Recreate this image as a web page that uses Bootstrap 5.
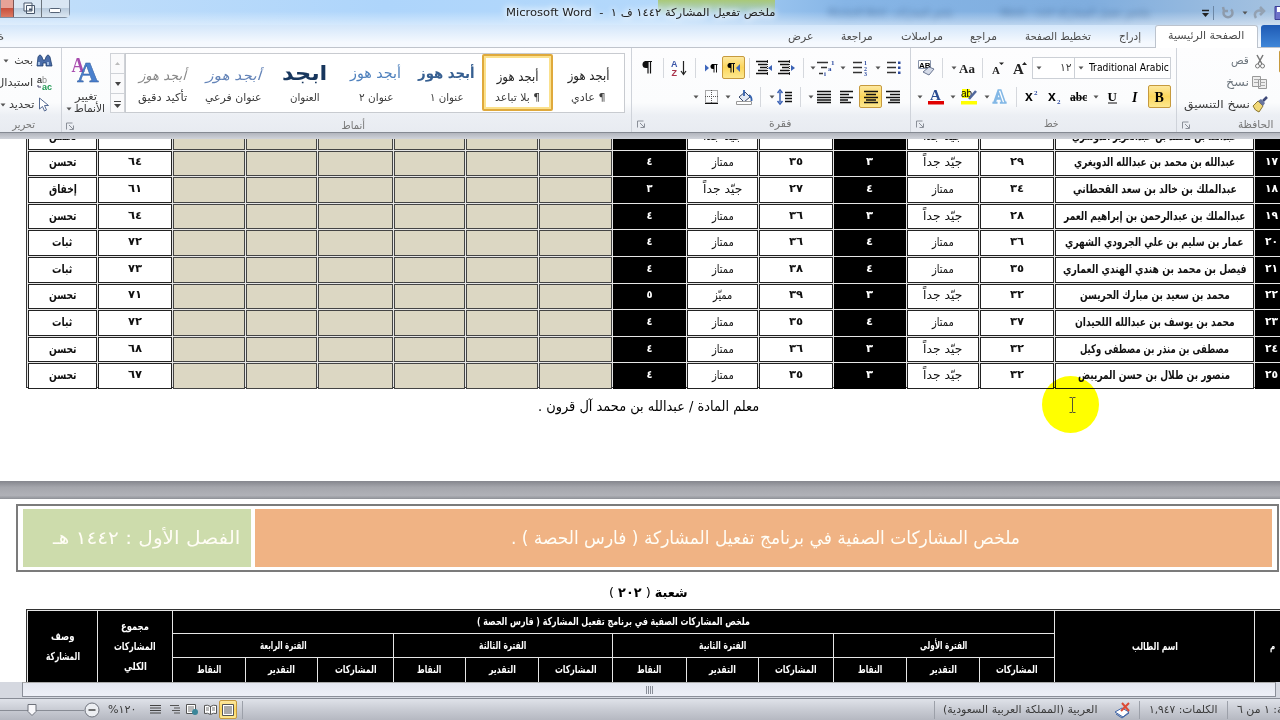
<!DOCTYPE html>
<html lang="ar">
<head>
<meta charset="utf-8">
<title>Microsoft Word</title>
<link href="https://cdn.jsdelivr.net/npm/bootstrap@5.3.0/dist/css/bootstrap.min.css" rel="stylesheet">
<style>
body{width:1280px;height:720px;overflow:hidden;font-family:"DejaVu Sans Condensed","DejaVu Sans",sans-serif;font-size:11px;line-height:1;color:#3b3b3b;background:#fff}
svg{display:block;flex:none;overflow:visible}
svg text{font-family:"Liberation Serif",serif}
.fit{display:inline-block;flex:none;white-space:nowrap;direction:rtl;text-align:right;line-height:20px;height:20px}
.fit>span{display:inline-block;transform-origin:100% 50%}
.ltr{direction:ltr;text-align:left}.ltr>span{transform-origin:0 50%}
.short{height:12px;line-height:12px}
.f9{font-size:9px}.f10{font-size:10px}.f11{font-size:11px}.f12{font-size:12px}.f13{font-size:13px}.f14{font-size:14px}.f16{font-size:16px}.f18{font-size:18px}.f20{font-size:20px}
.titlebar{height:25px;background:linear-gradient(#fff0 45%,#ffffff77),linear-gradient(90deg,#c3dffa,#aed5fb 30%,#b3d8fb 52%,#86b5e6 66%,#7fadde 85%,#a5c2e0)}
.glowtext{text-shadow:0 0 6px #fff,0 0 6px #fff,0 0 10px #fff;color:#222}
.greenish{left:658px;top:0;width:117px;height:16px;background:linear-gradient(#a9c978,#b4d3b000)}
.ghost{filter:blur(3px);color:#3d608a;opacity:.65}
.winbtns{left:0;top:0;width:70px;height:18px;border:1px solid #7d8da0;border-top:0;border-radius:0 0 5px 0;background:#dbe6f1}
.winbtns>i{height:17px;background:linear-gradient(#d9e6f3 48%,#b9cbdd 50%,#dbe7f2)}
.winbtns>.restorebtn{width:27px}
.winbtns>.closebtn{width:15px;background:linear-gradient(#e6a397 45%,#c9513d 50%,#dc7a62);border-right:1px solid #7d5555}
.tabsrow{height:23px;background:linear-gradient(#d3e6fa,#f5f9fe 80%);border-bottom:1px solid #bfc4cc}
.tabsrow .fit{color:#4c4c4c}
.tabactive{width:103px;height:23px;background:#fff;border:1px solid #bcc3cd;border-bottom:0;border-radius:3px 3px 0 0;margin-bottom:-1px}
.filetab{width:20px;height:22px;border-radius:3px 0 0 0;background:linear-gradient(#1e5ab4,#3f86d8)}
.ribbon{height:85px;background:linear-gradient(#fdfdfe,#fbfcfd 65%,#eceff4 80%,#e8ebf1);border-bottom:1px solid #858a93}
.grp{height:84px;border-left:1px solid #cfd3da;flex:none}
.grp .toolrow{height:29px}
.toolpad{padding-top:5px}
.caption{height:17px;color:#777}
.understrip{height:6px;background:linear-gradient(#b2b5bd,#d0d3da)}
.stylebtn{width:48px}
.gallery{width:500px;height:60px;border:1px solid #c8cbd0;background:#fff;padding:0 0 0 1px}
.stylecell{width:71px;height:57px}
.stylecell.on{border:2px solid #dfa93c;border-radius:2px;box-shadow:inset 0 0 0 2px #fbe18c}
.scroller{width:15px;height:60px;border:1px solid #cfd2d7;background:#fafafb}
.scroller>i{height:20px;border-bottom:1px solid #cfd2d7}
.hl{width:23px;height:23px;border:1px solid #c69a3e;border-radius:2px;background:linear-gradient(#fde8a0,#fbd65c 50%,#fde88f);flex:none}
.hl.viewbtn{width:18px;height:19px}
.combo{height:22px;border:1px solid #ccd0d6;background:#fff;flex:none}
.docarea{height:543px;background:#fff}
.firstpage{height:342px}
.grid16{display:grid;gap:1px;grid-template-columns:69px 74px 72px 71px 75px 71px 72px 73px 73px 71px 74px 72px 72px 74px 199px 41px;width:1300px;margin-left:26px;border:1px solid #333;padding:1px;background:#e6e6e6}
.grid16>div{display:flex;align-items:center;justify-content:center;overflow:hidden}
.gtop{grid-auto-rows:25.6px;border-top:0;margin-top:-16px;height:264.5px;color:#111;font-weight:bold}
.gtop>div{border:1px solid #222;background:#fff;padding-bottom:2px}
.gtop>.tan{background:#dcd7c3;border-color:#444}
.grid16>.blk{background:#000;color:#fff;border:0}
.gtop>.edgecell{padding-right:8px}
.ghead>.edgecell{padding-right:6px}
.ghead{grid-template-rows:22px 23px 24px;font-weight:bold;border-color:#333}
.pagebreak{height:18px;background:linear-gradient(#85868d,#a5a6ac 35%,#b0b1b7 80%,#8e9096)}
.banner{height:68px;margin:5px 1px 0 16px;border:2px solid #7b7b7b;padding:3px 5px;gap:4px;color:#fffdf5}
.bgreen{width:228px;background:#cddcac}.borange{background:#f0b384}
.sectionrow{height:37px}
.hscroll{height:16px;background:#d5d8e0}
.hthumb{width:1254px;height:15px;margin-left:22px;border:1px solid #8b8f99;border-top-color:#aaa;background:linear-gradient(#e4e7f0,#eef0f7)}
.statusbar{height:22px;background:linear-gradient(#dfe2e9,#c9ccd4 50%,#b5b8c1);border-top:1px solid #878b95}
.vsep{width:1px;height:18px;background:#9ca0a9;flex:none}
.spot{left:1042px;top:376px;width:57px;height:57px;border-radius:50%;background:#ff0;mix-blend-mode:multiply}
.ibeam{left:1066px;top:396px}
</style>
</head>
<body class="m-0">
<div class="titlebar position-relative">
  <div class="greenish position-absolute"></div>
  <div class="d-flex align-items-center h-100" id="titlerow"></div>
  <div class="winbtns position-absolute d-flex">
    <i class="closebtn"></i><i class="restorebtn"><svg width="27" height="17" viewBox="15 0 27 17"><path d="M25 3h8v8h-8z M27.500 5.500h8v8h-8z" fill="#f7fafc" stroke="#48566a"/><path d="M30 8.500h3v2h-3z" fill="#48566a"/></svg></i><i class="flex-fill border-start border-secondary"><svg width="27" height="17" viewBox="42 0 27 17"><rect x="49.500" y="8.500" width="11" height="4" rx="1" fill="#fff" stroke="#566477"/></svg></i>
  </div>
</div>
<div class="tabsrow d-flex align-items-end" id="tabsrow"></div>
<div class="ribbon d-flex overflow-hidden">
  <div class="grp border-0 position-relative" id="gEdit"></div>
  <div class="grp" id="gStyles"></div>
  <div class="grp" id="gPara"></div>
  <div class="grp" id="gFont"></div>
  <div class="grp" id="gClip"></div>
</div>
<div class="understrip"></div>
<div class="docarea overflow-hidden position-relative">
  <div class="firstpage overflow-hidden">
    <div class="grid16 gtop" id="gtop"></div>
    <div class="d-flex" id="teacher"></div>
  </div>
  <div class="pagebreak"></div>
  <div class="banner d-flex">
    <div class="bgreen d-flex align-items-center" id="bgreen"></div>
    <div class="borange flex-fill d-flex align-items-center" id="borange"></div>
  </div>
  <div class="sectionrow d-flex align-items-center" id="section"></div>
  <div class="grid16 ghead" id="ghead"></div>
</div>
<div class="hscroll"><div class="hthumb d-flex align-items-center justify-content-center"><svg width="9" height="8"><path d="M1.500 0v8M3.500 0v8M5.500 0v8M7.500 0v8" stroke="#8a8e98"/></svg></div></div>
<div class="statusbar d-flex align-items-center overflow-hidden" id="status"></div>
<div class="spot position-absolute"></div>
<svg class="ibeam position-absolute" width="13" height="18" viewBox="1066 396 13 18"><path d="M1069.500 397.500h2.500l.5 1 .5-1h2.500M1072.500 398v13.500M1069.500 412.500h2.500l.5-1 .5 1h2.500" fill="none" stroke="#555533"/></svg>
<script src="https://cdn.jsdelivr.net/npm/bootstrap@5.3.0/dist/js/bootstrap.bundle.min.js"></script>
<script>
const $=id=>document.getElementById(id);
const T=(t,w,c='')=>`<span class="fit ${c}" data-w="${w}"><span>${t}</span></span>`;
// row: items are [left, width, html], spacing is derived from the preceding item
const row=(start,items)=>{let p=start;return items.map(([x,w,h])=>{const m=x-p;p=x+w;return `<div class="flex-shrink-0" style="margin-left:${m}px;width:${w}px">${h}</div>`}).join('')};
const S=(x,y,w,h,b)=>[x,w,`<svg width="${w}" height="${h}" viewBox="${x} ${y} ${w} ${h}">${b}</svg>`];
const arrow=(x,y)=>S(x-3,y-2,6,4,`<path d="M${x-2.5} ${y-1.5}h5l-2.500 3z" fill="#555"/>`);
const sep=(x,y)=>S(x,y-10,1,20,`<path d="M${x+.5} ${y-10}v20" stroke="#d5d8dd"/>`);
const lines=(a,c='#111')=>`<path d="${a.map(([x,y,w])=>`M${x} ${y+.5}h${w}`).join('')}" stroke="${c}" fill="none" stroke-width="1.300"/>`;
const hl=(x,svg)=>[x,23,`<div class="hl d-flex align-items-center justify-content-center">${svg}</div>`];
const txt=(x,w,t,c)=>[x,w,T(t,w,c)];
const launch=x=>S(x,120,8,8,`<path d="M${x+.5} 127.500v-6.500h6M${x+3} 123l4 4M${x+7.500} 123.500v4h-4" stroke="#8a8f98" fill="none"/>`);

$('titlerow').innerHTML=row(0,[txt(506,269,'ملخص تفعيل المشاركة ١٤٤٢ ف ١ &nbsp;- &nbsp;Microsoft Word','glowtext'),
 [828,125,T('ملخص المشاركات - Microsoft Word',125,'ghost')],[1000,150,T('ملخص تفعيل المشاركة ١٤٤٢ - Word',150,'ghost')],
 S(1201,6,9,12,'<path d="M1202 9.500h7" stroke="#222" stroke-width="1.500"/><path d="M1202 12h7l-3.500 4z" fill="#222"/>'),
 S(1213,5,2,14,'<path d="M1213.500 5v14" stroke="#6c87a5"/>'),
 S(1221,4,14,14,'<path d="M1225 7.500a4.500 4.500 0 1 0 6 0M1223 5l1 4 4 0" fill="none" stroke="#8d9bac" stroke-width="2.500"/>'),
 arrow(1245,10),
 S(1253,4,14,14,'<path d="M1256 16c-3-5 1-9 6-7M1260 5l4 4-4 4" fill="none" stroke="#93a1b2" stroke-width="2.500"/>'),
 S(1274,4,6,14,'<path d="M1275 4.500h8v13h-8z" fill="#6e72c9" stroke="#3c3f96"/><path d="M1277 5h4v5h-4z" fill="#fff"/>')]);
$('tabsrow').innerHTML=row(0,[txt(-3,7,'ة'),txt(788,25,'عرض'),txt(841,32,'مراجعة'),txt(901,42,'مراسلات'),txt(970,27,'مراجع'),txt(1025,66,'تخطيط الصفحة'),txt(1119,22,'إدراج'),
 [1155,103,`<div class="tabactive d-flex justify-content-center">${T('الصفحة الرئيسية',76)}</div>`],[1261,19,'<div class="filetab"></div>']]);

const group=(w,start,r1,r2,cap)=>`<div class="toolpad" style="width:${w}px"><div class="toolrow d-flex align-items-center">${row(start,r1)}</div><div class="toolrow d-flex align-items-center">${row(start,r2)}</div><div class="caption d-flex align-items-center mt-1">${row(start,cap)}</div></div>`;
// editing
$('gEdit').innerHTML=`<div style="width:61px;padding-top:2px">`+[
 [arrow(6,60),txt(14,19,'بحث'),S(36,53,17,15,'<path d="M38 56q2-4 4 0l1 3h2l1-3q2-4 4 0l2 9h-6v-3h-3v3h-6z" fill="#4a6ca8" stroke="#22406f" stroke-width=".8"/><path d="M39 61v3M48 61v3" stroke="#bcd3f2" stroke-width="1.500"/>')],
 [txt(-4,37,'استبدال'),S(37,76,16,14,'<text x="37" y="83" font-size="9" style="font-family:Liberation Sans"><tspan>a</tspan><tspan fill="#888">b</tspan></text><text x="42" y="90" font-size="9" font-weight="bold" fill="#295" style="font-family:Liberation Sans">ac</text><path d="M38 85v2h3" stroke="#446" fill="none"/>')],
 [arrow(3,104),txt(9,25,'تحديد'),S(38,96,12,16,'<path d="M39.500 97v11l3-2.500 2 4.500 2-1-2-4.500h4z" fill="#fff" stroke="#556a93"/>')]
 ].map(r=>`<div class="d-flex align-items-center" style="height:22px">${row(0,r)}</div>`).join('')+`<div class="caption d-flex align-items-center">${row(0,[txt(12,23,'تحرير')])}</div></div>`;
// styles
const st=[['أبجد هوز',47,'f13 fst-italic','#8a8a8a','تأكيد دقيق',49],['أبجد هوز',55,'f13 fst-italic','#6484b8','عنوان فرعي',57],['ابجد',45,'f20 fw-bold text-decoration-underline','#17365d','العنوان',30],['أبجد هوز',51,'f14','#4f81bd','عنوان ٢',35],['أبجد هوز',57,'f14 fw-bold','#365f91','عنوان ١',34],['أبجد هوز',42,'f13','#222','¶ بلا تباعد',45],['أبجد هوز',42,'f13','#222','¶ عادي',35]];
$('gStyles').innerHTML=`<div style="width:569px"><div class="d-flex" style="height:69px;padding-top:5px">
<div class="stylebtn d-flex flex-column align-items-center"><svg width="30" height="30" viewBox="70 52 30 30"><text x="70.500" y="71" font-size="21" font-weight="bold" fill="#a84cae" textLength="13" lengthAdjust="spacingAndGlyphs">A</text><text x="76" y="81" font-size="30" font-weight="bold" fill="#4a80cd" stroke="#2a5597" stroke-width=".4">A</text></svg><div class="d-flex mt-2">${T('تغيير',22,'short')}</div><div class="d-flex align-items-center w-100">${row(62,[arrow(69,106),txt(74,31,'الأنماط','short')])}</div></div>
<div class="scroller"><i class="d-flex align-items-center justify-content-center"><svg width="5" height="3"><path d="M0 3h5l-2.500-3z" fill="#bbb"/></svg></i><i class="d-flex align-items-center justify-content-center"><svg width="6" height="4"><path d="M0 0h6l-3 4z" fill="#444"/></svg></i><i class="d-flex align-items-center justify-content-center border-0"><svg width="7" height="7"><path d="M0 .5h7" stroke="#444"/><path d="M0 3h7l-3.500 4z" fill="#444"/></svg></i></div>
<div class="gallery d-flex">${st.map((s,i)=>`<div class="stylecell ${i==5?'on':''} d-flex flex-column align-items-center"><div class="d-flex align-items-center" style="height:${i==5?32:34}px;color:${s[3]};padding-top:${s[2].includes('f13')?10:3}px">${T(s[0],s[1],s[2])}</div>${T(s[4],s[5])}</div>`).join('')}</div>
</div><div class="caption d-flex align-items-center">${row(62,[launch(66),txt(342,23,'أنماط')])}</div></div>`;
// paragraph
const ind=(x,d)=>S(x,60,17,16,lines([[x,61,12],[x+2,64,9],[x+4,67,7],[x+2,70,9],[x,73,12]])+`<path d="${d>0?`M${x+17} 68l-4-3v6z`:`M${x+12} 68l4-3v6z`}" fill="#3b62b5"/><path d="M${x+11.500} 60v16" stroke="#333" stroke-dasharray="1 1"/>`);
$('gPara').innerHTML=group(278,632,[
 S(641,61,12,15,'<path d="M648 62.500v12M650.500 62.500v12M645 62.500h7" stroke="#111" stroke-width="1.200"/><path d="M648 62h-2a3.500 3.500 0 0 0 0 7h2z" fill="#111"/>'),
 sep(663,68),S(671,60,16,16,'<text x="671" y="67" font-size="9" font-weight="bold" fill="#3b56a8" style="font-family:Liberation Sans">A</text><text x="671.500" y="76" font-size="9" font-weight="bold" fill="#a8324a" style="font-family:Liberation Sans">Z</text><path d="M683.500 61v13M681 71l2.500 3.500 2.500-3.500" fill="none" stroke="#222" stroke-width="1.200"/>'),
 sep(695,68),S(704,61,14,14,'<path d="M705 64.500l4 3.500-4 3.500z" fill="#3e67bd"/><path d="M714 64.500v8M716.500 64.500v8M712 64.500h5.500" stroke="#111"/><path d="M714 64h-1a2.500 2.500 0 0 0 0 5h1z"/>'),
 hl(722,'<svg width="14" height="10" viewBox="726 63 14 10"><path d="M739 64l-4 4 4 4z" fill="#3e67bd"/><path d="M730 63.500v9M732.500 63.500v9M728 63.500h6" stroke="#111"/><path d="M730 63h-1a2.500 2.500 0 0 0 0 5h1z"/></svg>'),
 sep(749,68),ind(756,-1),ind(778,1),sep(803,68),arrow(813,68),
 S(817,60,18,16,lines([[817,62,11],[821,67,6],[819,73,4]],'#333')+'<text x="831" y="65" font-size="7" font-weight="bold" fill="#2c4ba0">1</text><text x="828" y="71" font-size="7" font-weight="bold" fill="#2c4ba0">a</text><text x="824" y="76" font-size="7" font-weight="bold" fill="#2c4ba0">i</text>'),
 arrow(843,68),S(853,60,15,16,lines([[853,62,9],[853,67,9],[853,72,9]],'#333')+'<text x="864" y="65" font-size="6" font-weight="bold" fill="#2c4ba0">1</text><text x="864" y="70.500" font-size="6" font-weight="bold" fill="#2c4ba0">2</text><text x="864" y="76" font-size="6" font-weight="bold" fill="#2c4ba0">3</text>'),
 arrow(878,68),S(887,60,14,16,lines([[887,62,9],[887,67,9],[887,72,9]],'#333')+'<path d="M898 61.500h2.500v2.500h-2.500zM898 66.500h2.500v2.500h-2.500zM898 71.500h2.500v2.500h-2.500z" fill="#2c4ba0"/>')
],[
 arrow(696,97),S(704,90,15,14,'<path d="M705.500 90.500h12v12h-12zM711.500 90v13M705 96.500h13" fill="none" stroke="#555" stroke-dasharray="1 1"/><path d="M705 103.500h13" stroke="#111"/>'),
 arrow(728,97),S(736,89,17,16,'<path d="M739 97l6-5 5 5-6 5z" fill="#e5ebf5" stroke="#37476a"/><path d="M744 96v-6M749 95q3 2 2.500 6" stroke="#3663ae" stroke-width="1.800" fill="none"/><path d="M736.500 101.500h15v3h-15z" fill="#fff" stroke="#999"/>'),
 sep(760,97),arrow(772,97),S(777,89,16,16,'<path d="M780 92v10M777.500 93l2.500-3 2.500 3M777.500 101l2.500 3 2.500-3" stroke="#3b62b5" fill="none" stroke-width="1.500"/>'+lines([[785,92,7],[785,95,7],[785,98,7],[785,101,7]])),
 sep(800,97),arrow(811,97),
 S(817,91,14,12,lines([[817,91,14],[817,94,14],[817,97,14],[817,99.500,14],[817,102,14]])),
 S(840,91,14,12,lines([[840,91,13],[840,94,9],[840,97,13],[840,99.500,8],[840,102,11]])),
 hl(859,'<svg width="14" height="12" viewBox="863 91 14 12">'+lines([[863,91,14],[865,94,10],[863,97,14],[865,99.500,10],[863,102,14]])+'</svg>'),
 S(886,91,14,12,lines([[886,91,14],[890,94,10],[886,97,14],[890,99.500,10],[888,102,12]]))
],[launch(637),txt(769,22,'فقرة')]);
// font
$('gFont').innerHTML=group(265,911,[
 S(918,60,17,16,'<path d="M918.500 60.500h12v8h-12z" fill="#fff" stroke="#8894aa"/><text x="919" y="68" font-size="8" font-weight="bold" style="font-family:Liberation Sans">AB</text><path d="M923 72l6-5 5 2-5 6z" fill="#d5dbe8" stroke="#6a7691"/>'),
 sep(942,68),arrow(954,68),S(959,61,15,14,'<text x="959" y="73" font-size="13" font-weight="bold" fill="#222">Aa</text>'),sep(982,68),
 S(991,61,13,14,'<text x="992" y="74" font-size="11" font-weight="bold" fill="#222">A</text><path d="M999 62.500h5l-2.500 2.500z" fill="#222"/>'),
 S(1013,61,14,14,'<text x="1013" y="74" font-size="15" font-weight="bold" fill="#222">A</text><path d="M1022 65h5l-2.500-3z" fill="#222"/>'),
 [1032,43,`<div class="combo d-flex align-items-center">${row(1033,[arrow(1039,68),txt(1060,12,'١٢')])}</div>`],
 [1074,97,`<div class="combo d-flex align-items-center overflow-hidden">${row(1075,[arrow(1081,68),txt(1089,80,'Traditional Arabic','ltr text-black')])}</div>`]
],[
 arrow(920,97),S(927,89,17,16,'<text x="930" y="100" font-size="15" font-weight="bold" fill="#2a4d92">A</text><path d="M928 101h16v3.500h-16z" fill="#e00000"/>'),
 arrow(953,97),S(961,89,17,16,'<path d="M961 101h16v3.500h-16zM962 89h8v9h-8z" fill="#ff0"/><text x="961" y="97" font-size="10" style="font-family:Liberation Sans">ab</text><path d="M969 99l7-8" stroke="#50679c" stroke-width="2.500"/>'),
 arrow(987,97),S(991,89,17,16,'<text x="993" y="103" font-size="18" font-weight="bold" fill="#fff" stroke="#83b8e6" stroke-width="1.500">A</text>'),sep(1016,97),
 S(1025,89,14,15,'<text x="1025" y="101" font-size="14" font-weight="bold" style="font-family:Liberation Sans">x</text><text x="1034" y="95" font-size="7" font-weight="bold" fill="#2c4ba0">2</text>'),
 S(1048,89,14,15,'<text x="1048" y="101" font-size="14" font-weight="bold" style="font-family:Liberation Sans">x</text><text x="1057" y="104" font-size="7" font-weight="bold" fill="#2c4ba0">2</text>'),
 S(1070,90,17,14,'<text x="1070" y="101" font-size="11.500" font-weight="bold">abc</text><path d="M1070 98h17" stroke="#222"/>'),
 arrow(1096,97),S(1107,90,11,14,'<text x="1107.500" y="101" font-size="13" font-weight="bold">U</text><path d="M1108 103h9" stroke="#111"/>'),
 S(1130,90,11,14,'<text x="1132" y="102" font-size="14" font-weight="bold" font-style="italic">I</text>'),
 hl(1148,'<svg width="11" height="12" viewBox="0 0 11 12"><text x="0.500" y="11" font-size="14" font-weight="bold">B</text></svg>')
],[launch(916),txt(1044,15,'خط')]);
// clipboard
$('gClip').innerHTML=`<div style="width:103px;padding-top:2px">`+[
 [txt(1231,18,'قص','text-secondary'),S(1255,53,11,15,'<path d="M1257 54l5 9M1263 54l-5 9" stroke="#777" stroke-width="1.500"/><circle cx="1257.500" cy="65" r="2" fill="none" stroke="#777"/><circle cx="1262.500" cy="65" r="2" fill="none" stroke="#777"/>'),[1279,8,'<div class="hl"></div>']],
 [txt(1226,23,'نسخ','text-secondary'),S(1252,76,15,14,'<path d="M1252.500 76.500h8v10h-8zM1258.500 79.500h8v9h-8z" fill="#eee" stroke="#999"/><path d="M1254 79.500h4M1254 82.500h4M1260 82.500h5M1260 85.500h5" stroke="#aaa"/>')],
 [txt(1184,66,'نسخ التنسيق'),S(1252,97,16,14,'<path d="M1253 105l5-5 5 5-4 6q-4-1-6-6z" fill="#f1d878" stroke="#8c7631"/><path d="M1258 100l5 5 2-3-4-4z" fill="#69759f"/><path d="M1263 100l4-4" stroke="#3e4877" stroke-width="2.500"/>')]
 ].map(r=>`<div class="d-flex align-items-center" style="height:22px">${row(1177,r)}</div>`).join('')+`<div class="caption d-flex align-items-center">${row(1177,[launch(1182),txt(1238,35,'الحافظة')])}</div></div>`;

// students: no., name, name width, first period, second period, total, description
const m='ممتاز',j='جيّد جداً',x='مميّز';
const rows=[['١٦','عبدالله بن محمد بن عبدالعزيز الدوسري',165,'٣١',j,'٣','٢٩',j,'٤','٥٨','تحسن'],
['١٧','عبدالله بن محمد بن عبدالله الدويغري',161,'٢٩',j,'٣','٣٥',m,'٤','٦٤','تحسن'],
['١٨','عبدالملك بن خالد بن سعد القحطاني',164,'٣٤',m,'٤','٢٧',j,'٣','٦١','إخفاق'],
['١٩','عبدالملك بن عبدالرحمن بن إبراهيم العمر',181,'٢٨',j,'٣','٣٦',m,'٤','٦٤','تحسن'],
['٢٠','عمار بن سليم بن علي الجرودي الشهري',178,'٣٦',m,'٤','٣٦',m,'٤','٧٢','ثبات'],
['٢١','فيصل بن محمد بن هندي الهندي العماري',183,'٣٥',m,'٤','٣٨',m,'٤','٧٣','ثبات'],
['٢٢','محمد بن سعيد بن مبارك الحريسن',150,'٣٢',j,'٣','٣٩',x,'٥','٧١','تحسن'],
['٢٣','محمد بن يوسف بن عبدالله اللحيدان',160,'٣٧',m,'٤','٣٥',m,'٤','٧٢','ثبات'],
['٢٤','مصطفى بن منذر بن مصطفى وكيل',149,'٣٢',j,'٣','٣٦',m,'٤','٦٨','تحسن'],
['٢٥','منصور بن طلال بن حسن المريبض',152,'٣٢',j,'٣','٣٥',m,'٤','٦٧','تحسن']];
const C=(h,c='')=>`<div class="${c}">${h}</div>`,gw=g=>g==j?39:g==m?22:19,N=(t,w=14)=>T(t,w,'f11');
$('gtop').innerHTML=rows.map(r=>C(T(r[10],r[10]=='ثبات'?20:28,'f12'))+C(N(r[9]))+C('','tan').repeat(6)+C(N(r[8],6),'blk')+C(T(r[7],gw(r[7]),'f12 fw-normal'))+C(N(r[6]))+C(N(r[5],7),'blk')+C(T(r[4],gw(r[4]),'f12 fw-normal'))+C(N(r[3]))+C(T(r[1],r[2],'f12'))+`<div class="blk edgecell">${N(r[0],13)}</div>`).join('');
$('teacher').innerHTML=row(0,[txt(538,221,'معلم المادة / عبدالله بن محمد آل قرون .','f14 text-black mt-2')]);
$('bgreen').innerHTML=row(23,[txt(53,187,'الفصل الأول : ١٤٤٢ هـ','f18')]);
$('borange').innerHTML=row(255,[txt(511,509,'ملخص المشاركات الصفية في برنامج تفعيل المشاركة ( فارس الحصة ) .','f18')]);
$('section').innerHTML=row(0,[txt(609,79,'<span class="fw-bold">شعبة</span> ( <span class="fw-bold">٢٠٢</span> )','f13 text-black mt-1')]);
const G=(h,c,cs,r,rs)=>`<div class="blk flex-column" style="grid-area:${r}/${c}/span ${rs}/span ${cs}">${h}</div>`;
let h=G(T('وصف',24)+T('المشاركة',34),1,1,1,3)+G(T('مجموع',28)+T('المشاركات',42)+T('الكلي',23),2,1,1,3)+G(T('ملخص المشاركات الصفية في برنامج تفعيل المشاركة ( فارس الحصة )',273),3,12,1,1);
['الرابعة','الثالثة','الثانية','الأولى'].forEach((p,i)=>{h+=G(T('الفترة '+p,47),3+3*i,3,2,1);['النقاط','التقدير','المشاركات'].forEach((q,k)=>h+=G(T(q,[24,27,42][k]),3+3*i+k,1,3,1))});
h+=G(T('اسم الطالب',46),15,1,1,3)+`<div class="blk edgecell" style="grid-area:1/16/span 3/span 1">${T('م',5)}</div>`;
$('ghead').innerHTML=h;
// status bar
const pg=(a,b)=>`<path d="M${a} ${b}h11M${a} ${b+2.500}h11M${a} ${b+5}h11M${a} ${b+7.500}h11" stroke="#444"/>`;
$('status').innerHTML=row(0,[S(0,700,82,18,'<path d="M0 709.500h84" stroke="#888c95"/><path d="M28 703.500h8v7l-4 4-4-4z" fill="#f7f7fa" stroke="#6d717a"/>'),
 S(84,701,16,16,'<circle cx="92" cy="709" r="7" fill="#eceef2" stroke="#70747e"/><path d="M88.500 709h7" stroke="#444" stroke-width="1.500"/>'),txt(108,28,'%١٢٠','ltr'),
 S(150,704,12,11,pg(150,705.500)),S(170,704,10,11,'<path d="M170 705.500h9M174 708h6M172 710.500h8M174 713h6" stroke="#555"/>'),
 S(186,703,13,12,'<path d="M186.500 703.500h9v9h-9z" fill="#fff" stroke="#555"/><path d="M188 706h6M188 708h6M188 710h4" stroke="#777"/><circle cx="195" cy="711" r="3" fill="#3b8699"/>'),
 S(204,703,13,12,'<path d="M204.500 704.500q3-1 6 1 3-2 6-1v8q-3-1-6 1-3-2-6-1zM210.500 705v8" fill="#fff" stroke="#555"/><path d="M206 707h3M206 709h3M212 707h3M212 709h3" stroke="#777"/>'),
 [219,18,'<div class="hl viewbtn d-flex align-items-center justify-content-center"><svg width="12" height="12" viewBox="222 703 12 12"><path d="M222.500 703.500h11v11h-11z" fill="#fff" stroke="#555"/><path d="M224 706h8M224 708h8M224 710h8M224 712h8" stroke="#555"/></svg></div>'],
 [242,1,'<div class="vsep"></div>'],[934,1,'<div class="vsep"></div>'],txt(943,154,'العربية (المملكة العربية السعودية)'),
 S(1114,701,17,16,'<path d="M1115 711l7-4 7 4-6 5z" fill="#fff" stroke="#3e64a8"/><path d="M1116 713l6 4 7-5" stroke="#3e64a8" fill="none"/><path d="M1122 702l7 8M1129 702l-8 8" stroke="#dc4a35" stroke-width="2"/>'),
 [1139,1,'<div class="vsep"></div>'],txt(1149,68,'الكلمات: ١,٩٤٧'),[1227,1,'<div class="vsep"></div>'],txt(1237,74,'الصفحة: ١ من ٦')]);
document.querySelectorAll('.fit').forEach(e=>{e.style.width=e.dataset.w+'px';const s=e.firstElementChild;s.style.transform=`scaleX(${e.dataset.w/s.offsetWidth})`});
</script>
</body>
</html>
